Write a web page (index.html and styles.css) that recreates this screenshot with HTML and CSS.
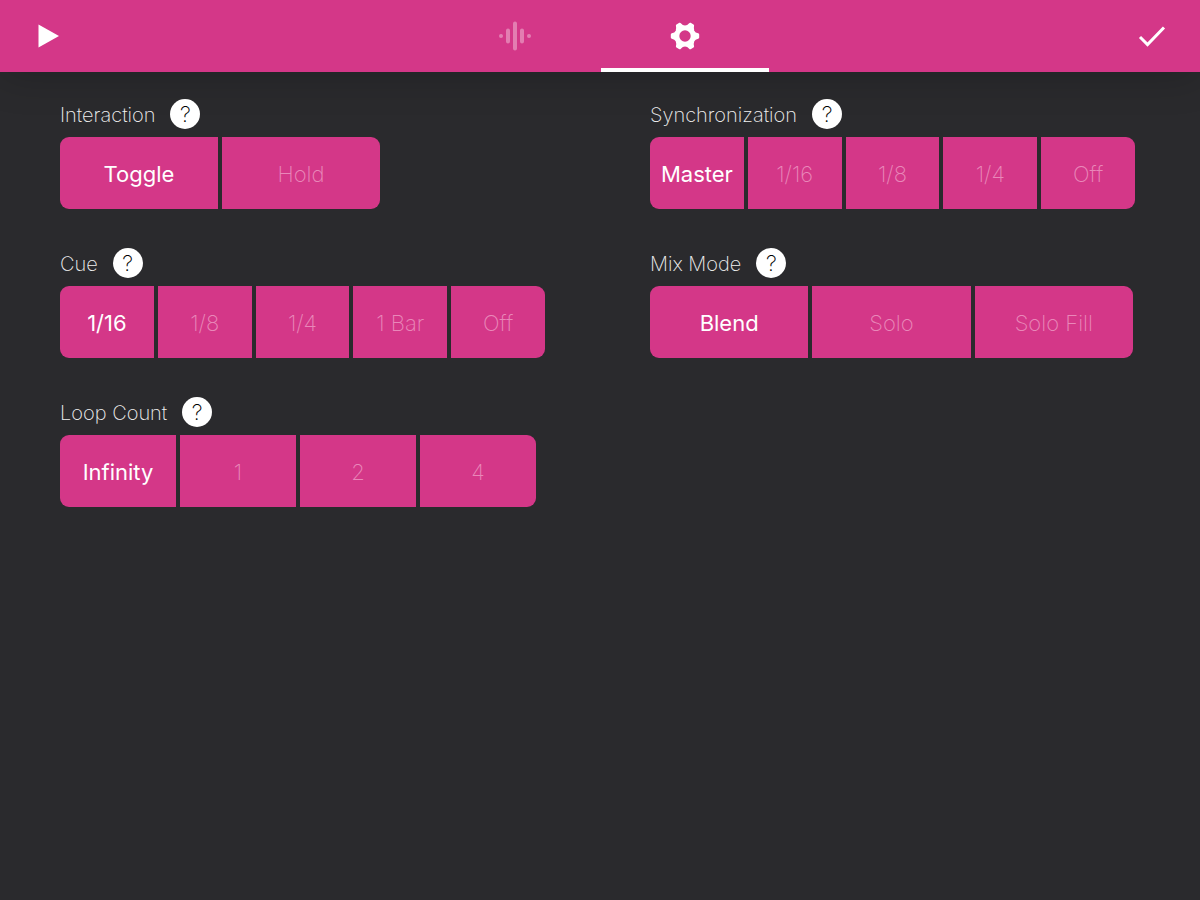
FILE: index.html
```html
<!DOCTYPE html>
<html lang="en">

<head>
    <meta charset="UTF-8">
    <meta name="viewport" content="width=device-width, initial-scale=1.0">
    <title>Loop Settings</title>
    <link rel="stylesheet" href="styles.css">
</head>

<body>
    <header class="toolbar">
        <button type="button" class="icon-button play" aria-label="Play">
            <svg width="22" height="24" viewBox="0 0 22 24"><path d="M0.5 0.5 L21 12 L0.5 23.5 Z" fill="#fff"/></svg>
        </button>

        <nav class="tabs">
            <button type="button" class="tab" aria-label="Sound">
                <svg width="34" height="32" viewBox="0 0 34 32" stroke="#fff" stroke-width="4" stroke-linecap="round">
                    <path d="M3 16h0.01M10 10.5v11M17 3.5v25M24 10.5v11M31 16h0.01"/>
                </svg>
            </button>
            <button type="button" class="tab active" aria-label="Settings">
                <svg width="30" height="30" viewBox="-15 -15 30 30">
                    <defs>
                        <mask id="hole">
                            <rect x="-15" y="-15" width="30" height="30" fill="#fff"/>
                            <circle r="5.7" fill="#000"/>
                        </mask>
                    </defs>
                    <!-- body with concave sides between six rounded teeth -->
                    <g mask="url(#hole)">
                        <path fill="#fff" stroke="#fff" stroke-width="2.4" stroke-linejoin="round"
                            d="M13 -1.6 L13 1.6 Q9.4 2.2 8.2 4.8 Q7.2 7.2 7.9 10.5 L5.1 12.1 Q2.9 9.3 0 9.3 Q-2.9 9.3 -5.1 12.1 L-7.9 10.5 Q-7.2 7.2 -8.2 4.8 Q-9.4 2.2 -13 1.6 L-13 -1.6 Q-9.4 -2.2 -8.2 -4.8 Q-7.2 -7.2 -7.9 -10.5 L-5.1 -12.1 Q-2.9 -9.3 0 -9.3 Q2.9 -9.3 5.1 -12.1 L7.9 -10.5 Q7.2 -7.2 8.2 -4.8 Q9.4 -2.2 13 -1.6 Z"/>
                    </g>
                </svg>
            </button>
        </nav>

        <button type="button" class="icon-button done" aria-label="Done">
            <svg width="28" height="22" viewBox="0 0 28 22" fill="none" stroke="#fff" stroke-width="3"><path d="M2 12 L9.5 19.5 L26 2.5"/></svg>
        </button>
    </header>

    <main class="settings">
        <div class="column">
            <section class="setting">
                <div class="heading">
                    <h2 id="interaction">Interaction</h2>
                    <button type="button" class="help" aria-label="Help on Interaction">?</button>
                </div>
                <div class="segments two" role="radiogroup" aria-labelledby="interaction">
                    <label><input type="radio" name="interaction" checked><span>Toggle</span></label>
                    <label><input type="radio" name="interaction"><span>Hold</span></label>
                </div>
            </section>

            <section class="setting">
                <div class="heading">
                    <h2 id="cue">Cue</h2>
                    <button type="button" class="help" aria-label="Help on Cue">?</button>
                </div>
                <div class="segments five" role="radiogroup" aria-labelledby="cue">
                    <label><input type="radio" name="cue" checked><span>1/16</span></label>
                    <label><input type="radio" name="cue"><span>1/8</span></label>
                    <label><input type="radio" name="cue"><span>1/4</span></label>
                    <label><input type="radio" name="cue"><span>1 Bar</span></label>
                    <label><input type="radio" name="cue"><span>Off</span></label>
                </div>
            </section>

            <section class="setting">
                <div class="heading">
                    <h2 id="loop">Loop Count</h2>
                    <button type="button" class="help" aria-label="Help on Loop Count">?</button>
                </div>
                <div class="segments four" role="radiogroup" aria-labelledby="loop">
                    <label><input type="radio" name="loop" checked><span>Infinity</span></label>
                    <label><input type="radio" name="loop"><span>1</span></label>
                    <label><input type="radio" name="loop"><span>2</span></label>
                    <label><input type="radio" name="loop"><span>4</span></label>
                </div>
            </section>
        </div>

        <div class="column">
            <section class="setting">
                <div class="heading">
                    <h2 id="sync">Synchronization</h2>
                    <button type="button" class="help" aria-label="Help on Synchronization">?</button>
                </div>
                <div class="segments five" role="radiogroup" aria-labelledby="sync">
                    <label><input type="radio" name="sync" checked><span>Master</span></label>
                    <label><input type="radio" name="sync"><span>1/16</span></label>
                    <label><input type="radio" name="sync"><span>1/8</span></label>
                    <label><input type="radio" name="sync"><span>1/4</span></label>
                    <label><input type="radio" name="sync"><span>Off</span></label>
                </div>
            </section>

            <section class="setting">
                <div class="heading">
                    <h2 id="mix">Mix Mode</h2>
                    <button type="button" class="help" aria-label="Help on Mix Mode">?</button>
                </div>
                <div class="segments three" role="radiogroup" aria-labelledby="mix">
                    <label><input type="radio" name="mix" checked><span>Blend</span></label>
                    <label><input type="radio" name="mix"><span>Solo</span></label>
                    <label><input type="radio" name="mix"><span>Solo Fill</span></label>
                </div>
            </section>
        </div>
    </main>
</body>

</html>
```
FILE: styles.css
```css
* {
    box-sizing: border-box;
}

body {
    margin: 0;
    min-height: 100vh;
    font-family: Inter, "Liberation Sans", sans-serif;
    background-color: #2a2a2d;
    color: #fff;
}

button {
    padding: 0;
    border: none;
    background: none;
    font-family: inherit;
    cursor: pointer;
}

svg {
    display: block;
}

/* top bar */
.toolbar {
    display: grid;
    grid-template-columns: 1fr auto 1fr;
    height: 72px;
    padding: 0 34px;
    background-color: #d43788;
    box-shadow: 0 4px 40px rgba(0, 0, 0, 0.2);
}

.icon-button {
    display: flex;
    align-items: center;
}

.play {
    justify-self: start;
    padding-left: 4px;
}

.done {
    justify-self: end;
}

.tabs {
    display: flex;
    gap: 2px;
}

.tab {
    display: flex;
    align-items: center;
    justify-content: center;
    width: 168px;
    border-top: 4px solid transparent;
    border-bottom: 4px solid transparent;
}

.tab svg {
    opacity: 0.35;
}

.tab.active {
    border-bottom-color: #fff;
}

.tab.active svg {
    opacity: 1;
}

/* settings */
.settings {
    display: grid;
    grid-template-columns: 1fr 1fr;
    gap: 100px;
    padding: 27px 60px;
}

.column {
    display: flex;
    flex-direction: column;
    gap: 39px;
}

.heading {
    display: flex;
    align-items: center;
    gap: 15px;
    height: 30px;
    margin-bottom: 8px;
}

h2 {
    margin: 0;
    padding-top: 2px;
    font-size: 20px;
    font-weight: 200;
    line-height: 28px;
    color: #f0f0f0;
}

.help {
    width: 30px;
    height: 30px;
    border-radius: 50%;
    background-color: #fff;
    color: #000;
    font-size: 22px;
    font-weight: 200;
    line-height: 30px;
}

.segments {
    display: flex;
    gap: 4px;
    height: 72px;
    max-width: 100%;
    border-radius: 9px;
    overflow: hidden;
}

.two {
    width: 320px;
}

.three {
    width: 483px;
}

.four {
    width: 476px;
}

.five {
    width: 485px;
}

.segments label {
    position: relative;
    display: flex;
    flex: 1 1 0;
    align-items: center;
    justify-content: center;
    min-width: 0;
    padding-top: 2px;
    background-color: #d43788;
    font-size: 22px;
    font-weight: 200;
    line-height: 28px;
    color: #e987b9;
    cursor: pointer;
}

.segments input {
    position: absolute;
    inset: 0;
    margin: 0;
    opacity: 0;
    cursor: pointer;
}

.segments input:checked + span {
    font-weight: 400;
    color: #fff;
}
```
